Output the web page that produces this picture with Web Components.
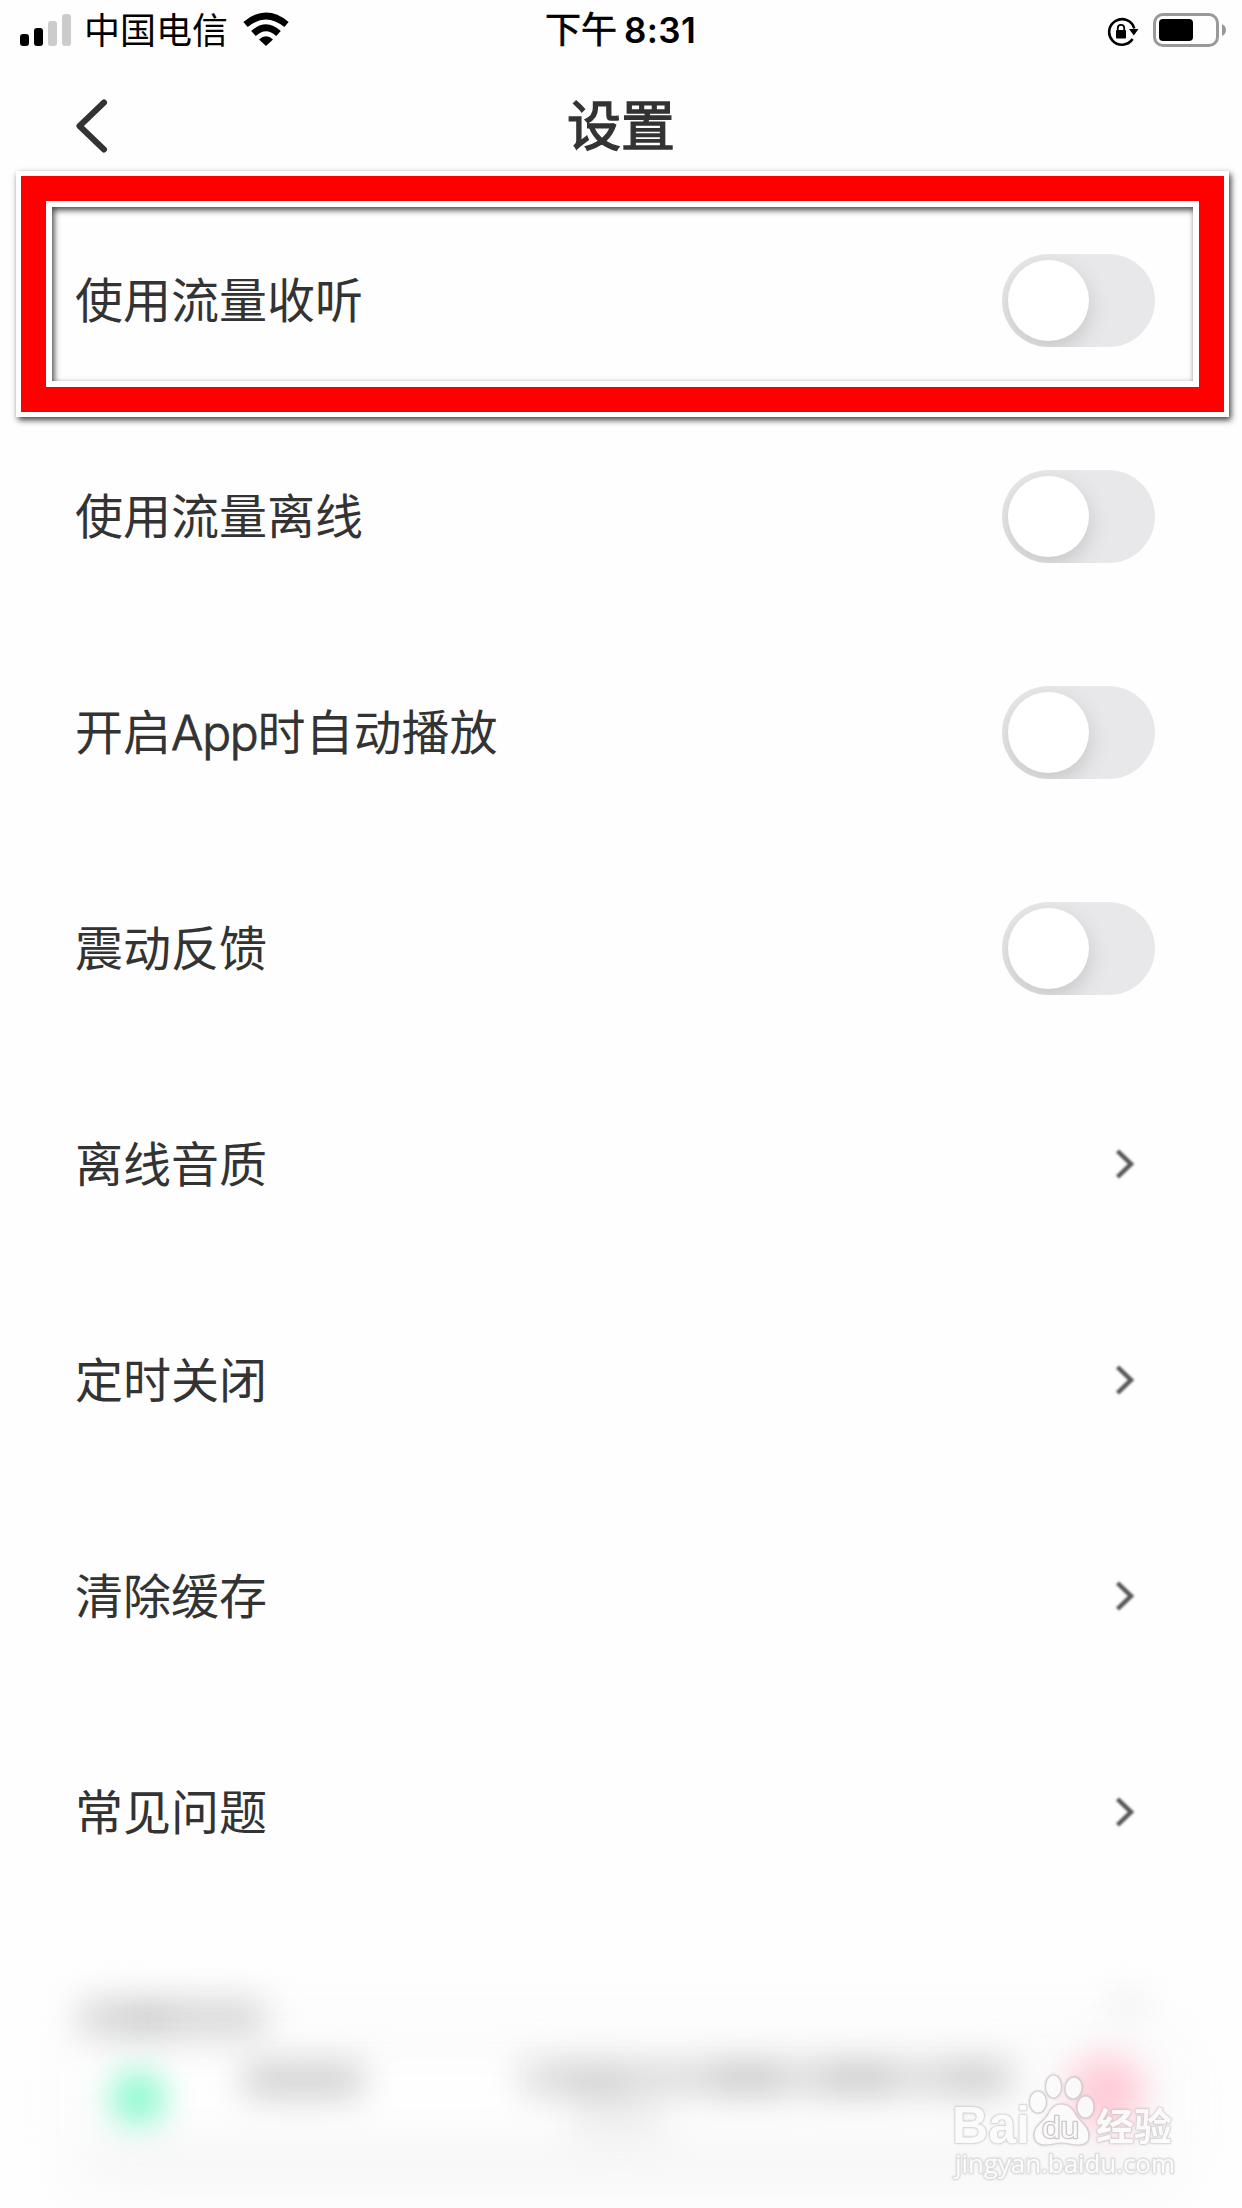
<!DOCTYPE html>
<html lang="zh-CN">
<head>
<meta charset="utf-8">
<title>设置</title>
<style>
  body {
    margin: 0;
    width: 1242px;
    height: 2208px;
    overflow: hidden;
    background: #fefefe;
    color: #333;
    font-family: 'Liberation Sans', 'Noto Sans CJK SC', sans-serif;
  }
  .latin {
    font-family: Inter, sans-serif;
    font-weight: 300;
    letter-spacing: -1.2px;
    line-height: 1;
    -webkit-text-stroke: 0.8px #333;
  }
</style>
</head>
<body>
<settings-page>
  <status-bar slot='status' carrier='中国电信' period='下午' time='8:31'></status-bar>
  <nav-header slot='header'>设置</nav-header>
  <setting-row type='switch' highlight>使用流量收听</setting-row>
  <setting-row type='switch'>使用流量离线</setting-row>
  <setting-row type='switch'>开启<span class='latin'>App</span>时自动播放</setting-row>
  <setting-row type='switch'>震动反馈</setting-row>
  <setting-row type='link'>离线音质</setting-row>
  <setting-row type='link'>定时关闭</setting-row>
  <setting-row type='link'>清除缓存</setting-row>
  <setting-row type='link'>常见问题</setting-row>
  <blurred-player slot='footer'></blurred-player>
  <site-watermark slot='footer'></site-watermark>
</settings-page>

<script>
class BaseElement extends HTMLElement {
  constructor () {
    super()
    this.attachShadow({ mode: 'open' })
  }

  connectedCallback () {
    this.shadowRoot.innerHTML = `<style>${this.css}</style>${this.html}`
  }
}

class SettingsPage extends BaseElement {
  get css () {
    return `
      :host {
        display: flex;
        flex-direction: column;
        position: relative;
        width: 1242px;
        height: 2208px;
      }
      .list {
        display: flex;
        flex-direction: column;
      }
      .footer {
        flex: 1;
        position: relative;
      }
    `
  }

  get html () {
    return `
      <slot name='status'></slot>
      <slot name='header'></slot>
      <div class='list'><slot></slot></div>
      <div class='footer'><slot name='footer'></slot></div>
    `
  }
}

class StatusBar extends BaseElement {
  get css () {
    return `
      :host {
        display: grid;
        grid-template-columns: 1fr auto 1fr;
        grid-template-rows: 60px;
        align-items: center;
        box-sizing: border-box;
        height: 60px;
        padding: 0 15px 0 20px;
        color: #000;
        font-size: 36px;
        line-height: 56px;
      }
      svg { display: block; }
      .left, .right { display: flex; align-items: center; }
      .right { justify-content: flex-end; gap: 14px; }
      .carrier { margin: 3px 15px 0 13px; }
      .time {
        display: flex;
        gap: 7px;
        margin: 2px 6px 0 0;
        -webkit-text-stroke: 0.7px #000;
      }
      .clock {
        margin-top: -1px;
        font: 600 35px/56px Inter, sans-serif;
        letter-spacing: 0.4px;
        -webkit-text-stroke: 0;
      }
    `
  }

  get html () {
    return `
      <div class='left'>
        <svg width='51' height='60'>
          <rect x='0' y='34' width='9' height='12' rx='3'/>
          <rect x='14' y='28' width='9' height='18' rx='3'/>
          <rect x='28' y='21' width='9' height='25' rx='3' fill='#ccc'/>
          <rect x='42' y='14' width='9' height='32' rx='3' fill='#ccc'/>
        </svg>
        <span class='carrier'>${this.getAttribute('carrier')}</span>
        <svg width='46' height='60' fill='none' stroke='#000'>
          <path d='M2.500 24.500 Q23 7.500 43.500 24.500' stroke-width='6.800'/>
          <path d='M10.500 33.500 Q23 22 35.500 33.500' stroke-width='6.800'/>
          <path d='M16 39.500 Q23 33 30 39.500 L23 46 Z' fill='#000' stroke='none'/>
        </svg>
      </div>
      <div class='time'>
        <span>${this.getAttribute('period')}</span>
        <span class='clock'>${this.getAttribute('time')}</span>
      </div>
      <div class='right'>
        <svg width='32' height='60'>
          <path d='M25.600 39.100 A12.800 12.800 0 1 1 27.300 28.500' fill='none' stroke='#000' stroke-width='2.600'/>
          <path d='M22 29 H31.500 L26.800 35.500 Z'/>
          <rect x='9' y='30' width='10' height='8.500' rx='1'/>
          <path d='M10.800 30.500 V28 A3.200 3.200 0 0 1 17.200 28 V30.500' fill='none' stroke='#000' stroke-width='1.800'/>
        </svg>
        <svg width='74' height='60'>
          <rect x='1.500' y='14.500' width='63' height='31' rx='8.500' fill='none' stroke='#999' stroke-width='3'/>
          <rect x='6' y='19' width='34' height='22' rx='4'/>
          <path d='M69 24 Q73 26 73 30 Q73 34 69 36 Z' fill='#999'/>
        </svg>
      </div>
    `
  }
}

class NavHeader extends BaseElement {
  get css () {
    return `
      :host {
        display: grid;
        grid-template-columns: 1fr auto 1fr;
        grid-template-rows: 132px;
        align-items: center;
        height: 132px;
        font-size: 54px;
        line-height: 80px;
      }
      svg { display: block; margin-left: 74px; }
      .title { margin-top: 2px; -webkit-text-stroke: 1.4px #333; }
    `
  }

  get html () {
    return `
      <svg width='36' height='132' fill='none' stroke='#333' stroke-width='6' stroke-linecap='round' stroke-linejoin='round'>
        <path d='M30 42.500 L5.500 66 L30 89.500'/>
      </svg>
      <span class='title'><slot></slot></span>
    `
  }
}

class SettingRow extends BaseElement {
  get css () {
    return `
      :host {
        display: flex;
        position: relative;
        align-items: center;
        justify-content: space-between;
        box-sizing: border-box;
        height: 216px;
        padding: 0 87px 0 75px;
        font-size: 48px;
        line-height: 72px;
      }
      svg { display: block; margin-right: 18px; filter: blur(0.8px); }
      .label { margin-top: 3px; }
    `
  }

  get html () {
    const control = this.getAttribute('type') === 'switch'
      ? `<toggle-switch></toggle-switch>`
      : `<svg width='24' height='36' fill='none' stroke='#555' stroke-width='4.500'>
          <path d='M4.500 5 L18 18 L4.500 31'/>
        </svg>`
    const frame = this.hasAttribute('highlight') ? `<highlight-frame></highlight-frame>` : ``
    return `<span class='label'><slot></slot></span>${control}${frame}`
  }
}

class ToggleSwitch extends BaseElement {
  get css () {
    return `
      :host {
        display: block;
        box-sizing: border-box;
        width: 153px;
        height: 93px;
        margin-top: 1px;
        padding: 6px;
        overflow: hidden;
        border-radius: 47px;
        background: #e8e8ea;
      }
      .knob {
        width: 81px;
        height: 81px;
        border-radius: 50%;
        background: #fff;
        box-shadow: 0 8px 22px rgba(0, 0, 0, 0.15);
      }
    `
  }

  get html () {
    return `<div class='knob'></div>`
  }
}

// red marker with a white edge on both sides, laid over the row
class HighlightFrame extends BaseElement {
  get css () {
    return `
      :host {
        position: absolute;
        box-sizing: border-box;
        left: 16px;
        top: -21px;
        width: 1213px;
        height: 246px;
        border: 5px solid #fff;
        box-shadow: 2px 3px 6px rgba(0, 0, 0, 0.75);
      }
      .red {
        box-sizing: border-box;
        height: 100%;
        border: 25px solid #f00;
      }
      .inner {
        box-sizing: border-box;
        height: 100%;
        border: 6px solid #fff;
        box-shadow: inset 2px 3px 6px rgba(0, 0, 0, 0.75);
      }
    `
  }

  get html () {
    return `<div class='red'><div class='inner'></div></div>`
  }
}

class BlurredPlayer extends BaseElement {
  get css () {
    return `
      :host { display: block; height: 288px; overflow: hidden; }
      svg { display: block; }
      .soft { filter: blur(17px); }
      .wide { filter: blur(24px); }
    `
  }

  get html () {
    return `
      <svg width='1242' height='288'>
        <g class='wide'>
          <rect x='60' y='95' width='1130' height='190' rx='50' fill='#fbfbfb'/>
          <rect x='85' y='225' width='1070' height='30' fill='#f5f5f5'/>
          <rect x='85' y='145' width='950' height='58' rx='29' fill='#fff'/>
        </g>
        <g class='soft'>
          <rect x='80' y='80' width='184' height='36' fill='#d6d6d6'/>
          <rect x='125' y='84' width='45' height='30' fill='#c8c8c8'/>
          <circle cx='138' cy='178' r='26' fill='#7cf8c8'/>
          <rect x='244' y='143' width='118' height='34' fill='#cecece'/>
          <rect x='522' y='141' width='490' height='34' fill='#dadada'/>
          <rect x='565' y='147' width='60' height='30' fill='#cecece'/>
          <rect x='715' y='141' width='64' height='34' fill='#c8c8c8'/>
          <rect x='825' y='141' width='66' height='34' fill='#c8c8c8'/>
          <rect x='945' y='141' width='58' height='34' fill='#ccc'/>
          <rect x='575' y='182' width='88' height='38' fill='#eee'/>
          <circle cx='1106' cy='173' r='38' fill='#ffcbd7'/>
          <rect x='1115' y='70' width='26' height='30' fill='#f0f0f0'/>
        </g>
      </svg>
    `
  }
}

class SiteWatermark extends BaseElement {
  get css () {
    return `
      :host {
        position: absolute;
        left: 942px;
        top: 144px;
        width: 246px;
        height: 130px;
      }
      svg { display: block; filter: drop-shadow(0 0 1px rgba(0, 0, 0, 0.18)); }
      text { paint-order: stroke; stroke-linejoin: round; }
    `
  }

  get html () {
    return `
      <svg width='246' height='130' fill='#fff' fill-opacity='0.9' stroke='#d3cfd0' stroke-width='1.200'>
        <text x='10' y='79' font-family='Liberation Sans' font-weight='700' font-size='51' textLength='78' lengthAdjust='spacingAndGlyphs'>Bai</text>
        <ellipse cx='96' cy='38' rx='8.500' ry='11'/>
        <ellipse cx='111.500' cy='22.500' rx='8' ry='11.500'/>
        <ellipse cx='131.500' cy='24' rx='8.500' ry='11' transform='rotate(8 131.500 24)'/>
        <ellipse cx='143.500' cy='43' rx='8.500' ry='11'/>
        <path d='M119.500 40 C127 40 131 45 134 51 C138 58 147 62 147 72 C147 79 143 81 137 81 C130 81 126 79 119.500 79 C113 79 110 81 103 81 C96 81 92 77 92 71 C92 61 102 58 106 50 C109 44 113 40 119.500 40 Z'/>
        <text x='100' y='74' font-family='Liberation Sans' font-size='30' textLength='37' lengthAdjust='spacingAndGlyphs' stroke='#ccc6c8' stroke-width='2.500'>du</text>
        <text x='154' y='76' font-family='Noto Sans CJK SC' font-weight='700' font-size='38' textLength='76'>经验</text>
        <text x='13' y='109' font-family='Open Sans' font-size='26' textLength='220' stroke='#ddd' stroke-width='1.800'>jingyan.baidu.com</text>
      </svg>
    `
  }
}

window.customElements.define('settings-page', SettingsPage)
window.customElements.define('status-bar', StatusBar)
window.customElements.define('nav-header', NavHeader)
window.customElements.define('setting-row', SettingRow)
window.customElements.define('toggle-switch', ToggleSwitch)
window.customElements.define('highlight-frame', HighlightFrame)
window.customElements.define('blurred-player', BlurredPlayer)
window.customElements.define('site-watermark', SiteWatermark)
</script>
</body>
</html>
